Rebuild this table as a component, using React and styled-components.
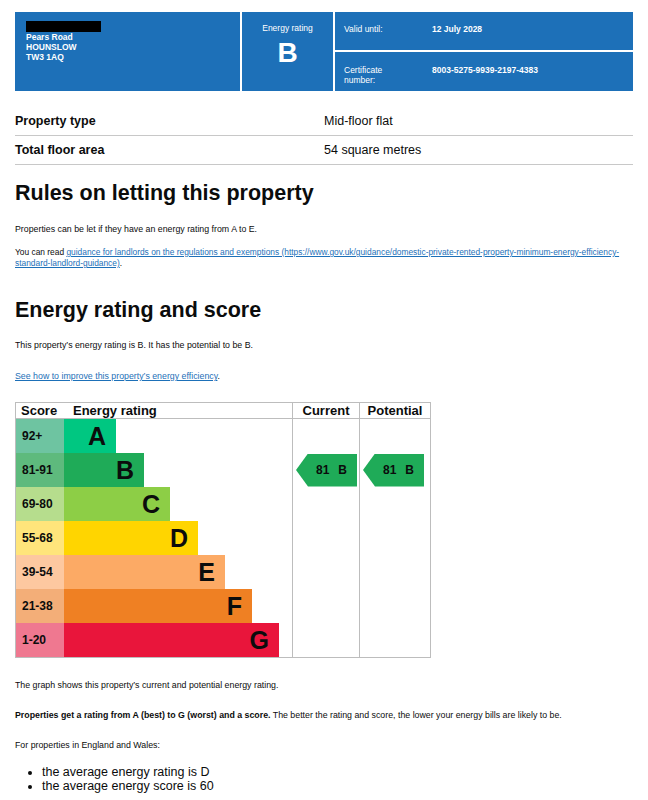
import styled, { createGlobalStyle } from "styled-components";

const GlobalStyle = createGlobalStyle`
  * { box-sizing: border-box; }
  body {
    margin: 0;
    background: #ffffff;
    color: #0b0c0c;
    font-family: "Liberation Sans", Arial, sans-serif;
  }
`;

const Page = styled.div`
  width: 648px;
  padding: 12px 15px 0 15px;
`;

const Summary = styled.header`
  display: grid;
  grid-template-columns: 225px 91px 1fr;
  gap: 2px;
  height: 79px;
`;

const Panel = styled.div`
  background: #1d70b8;
  color: #ffffff;
  font-size: 8.5px;
  line-height: 10px;
`;

const AddressPanel = styled(Panel)`
  padding: 9px 11px;
  font-weight: 700;
`;

const Redacted = styled.div`
  width: 75px;
  height: 11px;
  background: #000000;
`;

const RatingPanel = styled(Panel)`
  display: flex;
  flex-direction: column;
  align-items: center;
  padding-top: 11px;
`;

const RatingLetter = styled.div`
  margin-top: 6px;
  font-size: 28px;
  line-height: 28px;
  font-weight: 700;
`;

const MetaColumn = styled.div`
  display: grid;
  grid-template-rows: 38px 1fr;
  gap: 2px;
`;

const MetaRow = styled(Panel)`
  display: grid;
  grid-template-columns: 88px 1fr;
  padding: ${(p) => p.$top}px 9px 0;
`;

const MetaValue = styled.span`
  font-weight: 700;
`;

const Facts = styled.div`
  margin-top: 16px;
`;

const FactRow = styled.div`
  display: grid;
  grid-template-columns: 309px 1fr;
  align-items: center;
  height: 29px;
  border-bottom: 1px solid #c8c8c8;
  font-size: 12.5px;
`;

const FactLabel = styled.span`
  font-weight: 700;
`;

const Heading = styled.h2`
  margin: ${(p) => p.$mt}px 0 0;
  font-size: 21.5px;
  line-height: 26px;
  font-weight: 700;
`;

const Text = styled.p`
  margin: ${(p) => p.$mt}px 0 0;
  font-size: ${(p) => p.$size || 8.8}px;
  line-height: 11px;
`;

const Link = styled.a`
  color: #1d70b8;
  text-decoration: underline;
`;

const Chart = styled.div`
  margin-top: 20px;
  width: 416px;
  border: 1px solid #bdbdbd;
`;

const ChartRow = styled.div`
  display: grid;
  grid-template-columns: 48px 228px 67px 71px;
  height: 34px;
`;

const ChartHead = styled(ChartRow)`
  height: 16px;
  border-bottom: 1px solid #bdbdbd;
  font-size: 13px;
  line-height: 15px;
  font-weight: 700;
`;

const HeadCell = styled.div`
  padding-left: ${(p) => p.$pad || 0}px;
  text-align: ${(p) => (p.$center ? "center" : "left")};
  border-left: ${(p) => (p.$line ? "1px solid #bdbdbd" : "none")};
`;

const ScoreCell = styled.div`
  display: flex;
  align-items: center;
  padding-left: 6px;
  background: ${(p) => p.$tint};
  font-size: 12px;
  font-weight: 700;
`;

const Track = styled.div`
  display: flex;
`;

const Bar = styled.div`
  display: flex;
  align-items: center;
  justify-content: flex-end;
  padding-right: 10px;
  background: ${(p) => p.$color};
  font-size: 25px;
  font-weight: 700;
`;

const RatingCell = styled.div`
  display: flex;
  align-items: center;
  padding-left: 3px;
  border-left: 1px solid #bdbdbd;
`;

const Arrow = styled.div`
  display: flex;
  align-items: center;
  justify-content: center;
  gap: 9px;
  width: 61px;
  height: 33px;
  padding-left: 10px;
  background: #1fab58;
  clip-path: polygon(12px 0, 100% 0, 100% 100%, 12px 100%, 0 50%);
  font-size: 12px;
  font-weight: 700;
`;

const Bullets = styled.ul`
  margin: 14px 0 0;
  padding-left: 27px;
  font-size: 12.5px;
  line-height: 14px;
`;

const bands = [
  { score: "92+", letter: "A", width: 52, color: "#00c781", tint: "#6ec4a1" },
  { score: "81-91", letter: "B", width: 80, color: "#1fab58", tint: "#5eba7d" },
  { score: "69-80", letter: "C", width: 106, color: "#8dce46", tint: "#b6dd8d" },
  { score: "55-68", letter: "D", width: 134, color: "#ffd500", tint: "#ffe57b" },
  { score: "39-54", letter: "E", width: 161, color: "#fcaa65", tint: "#fdc8a0" },
  { score: "21-38", letter: "F", width: 188, color: "#ef8023", tint: "#f3ae78" },
  { score: "1-20", letter: "G", width: 215, color: "#e9153b", tint: "#ef7890" },
];

export default function App() {
  const current = "B";
  const potential = "B";

  return (
    <Page>
      <GlobalStyle />
      <Summary>
        <AddressPanel>
          <Redacted />
          <div>Pears Road</div>
          <div>HOUNSLOW</div>
          <div>TW3 1AQ</div>
        </AddressPanel>
        <RatingPanel>
          <div>Energy rating</div>
          <RatingLetter>B</RatingLetter>
        </RatingPanel>
        <MetaColumn>
          <MetaRow $top={12}>
            <span>Valid until:</span>
            <MetaValue>12 July 2028</MetaValue>
          </MetaRow>
          <MetaRow $top={13}>
            <span>
              Certificate
              <br />
              number:
            </span>
            <MetaValue>8003-5275-9939-2197-4383</MetaValue>
          </MetaRow>
        </MetaColumn>
      </Summary>

      <Facts>
        <FactRow>
          <FactLabel>Property type</FactLabel>
          <span>Mid-floor flat</span>
        </FactRow>
        <FactRow>
          <FactLabel>Total floor area</FactLabel>
          <span>54 square metres</span>
        </FactRow>
      </Facts>

      <Heading $mt={15}>Rules on letting this property</Heading>
      <Text $mt={18}>Properties can be let if they have an energy rating from A to E.</Text>
      <Text $mt={12} $size={8.4}>
        You can read{" "}
        <Link href="#">
          guidance for landlords on the regulations and exemptions
          (https://www.gov.uk/guidance/domestic-private-rented-property-minimum-energy-efficiency-
          <br />
          standard-landlord-guidance)
        </Link>
        .
      </Text>

      <Heading $mt={28}>Energy rating and score</Heading>
      <Text $mt={17}>This property’s energy rating is B. It has the potential to be B.</Text>
      <Text $mt={20}>
        <Link href="#">See how to improve this property’s energy efficiency</Link>.
      </Text>

      <Chart>
        <ChartHead>
          <HeadCell $pad={5}>Score</HeadCell>
          <HeadCell $pad={9}>Energy rating</HeadCell>
          <HeadCell $center $line>Current</HeadCell>
          <HeadCell $center $line>Potential</HeadCell>
        </ChartHead>
        {bands.map((b) => (
          <ChartRow key={b.letter}>
            <ScoreCell $tint={b.tint}>{b.score}</ScoreCell>
            <Track>
              <Bar $color={b.color} style={{ width: b.width }}>
                {b.letter}
              </Bar>
            </Track>
            <RatingCell>
              {b.letter === current && (
                <Arrow>
                  <span>81</span>
                  <span>B</span>
                </Arrow>
              )}
            </RatingCell>
            <RatingCell>
              {b.letter === potential && (
                <Arrow>
                  <span>81</span>
                  <span>B</span>
                </Arrow>
              )}
            </RatingCell>
          </ChartRow>
        ))}
      </Chart>

      <Text $mt={22}>The graph shows this property’s current and potential energy rating.</Text>
      <Text $mt={19}>
        <strong>Properties get a rating from A (best) to G (worst) and a score.</strong> The
        better the rating and score, the lower your energy bills are likely to be.
      </Text>
      <Text $mt={19}>For properties in England and Wales:</Text>
      <Bullets>
        <li>the average energy rating is D</li>
        <li>the average energy score is 60</li>
      </Bullets>
    </Page>
  );
}
